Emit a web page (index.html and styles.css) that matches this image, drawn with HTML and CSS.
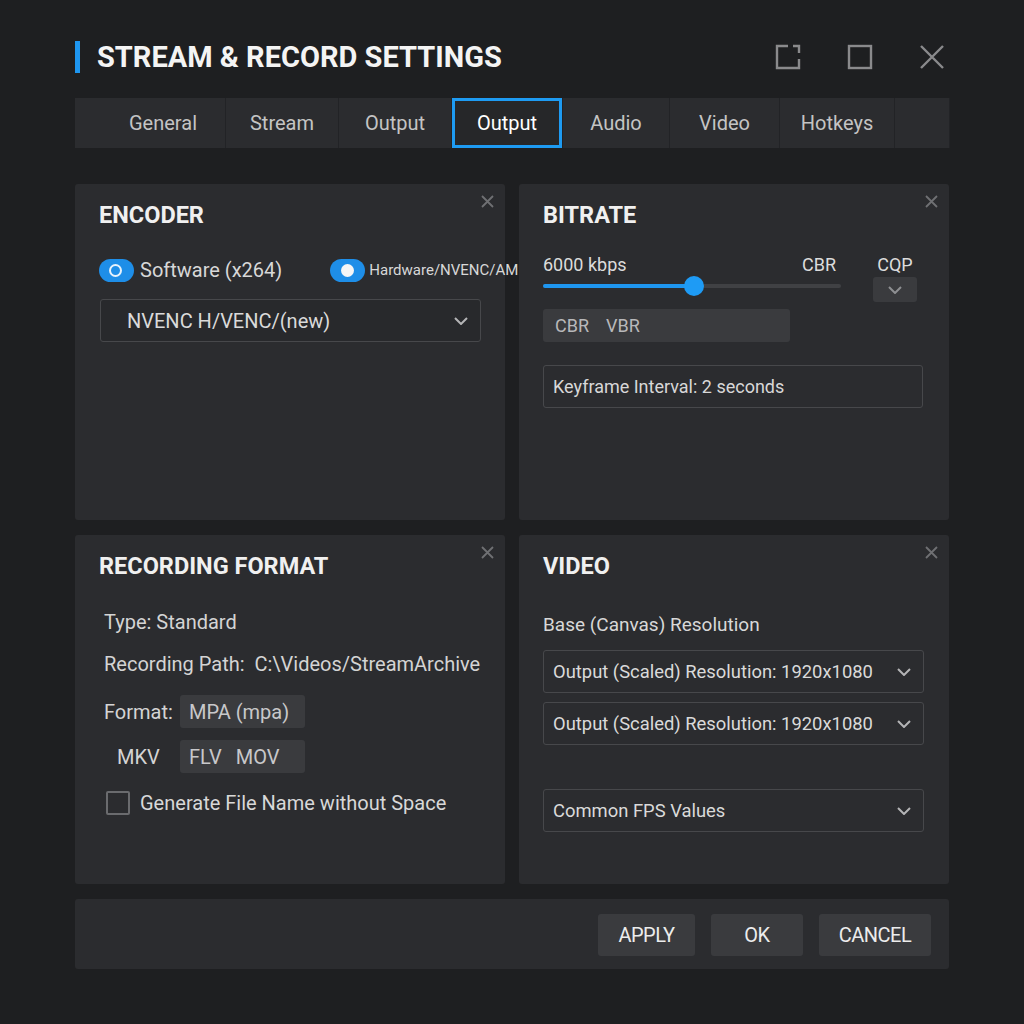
FILE: index.html
```html
<!DOCTYPE html>
<html lang="en">
<head>
  <meta charset="UTF-8" />
  <meta name="viewport" content="width=device-width, initial-scale=1.0" />
  <title>Stream &amp; Record Settings</title>
  <link rel="stylesheet" href="styles.css">
</head>
<body>
  <div class="window">
    <header class="titlebar">
      <h1>STREAM &amp; RECORD SETTINGS</h1>
      <div class="win-controls">
        <svg width="26" height="26" viewBox="0 0 26 26" fill="none" stroke="#8a8a8c" stroke-width="2.4">
          <path d="M13 2H2v22h22v-9" />
          <path d="M18 2h6v7" />
        </svg>
        <svg width="26" height="26" viewBox="0 0 26 26" fill="none" stroke="#8a8a8c" stroke-width="2.4">
          <rect x="2" y="2" width="22" height="22" />
        </svg>
        <svg width="26" height="26" viewBox="0 0 26 26" fill="none" stroke="#8a8a8c" stroke-width="2.4">
          <path d="M2 2l22 22M24 2L2 24" />
        </svg>
      </div>
    </header>

    <nav class="tabs">
      <div class="tab tab-first">General</div>
      <div class="tab w112">Stream</div>
      <div class="tab w112">Output</div>
      <div class="tab active">Output</div>
      <div class="tab w106">Audio</div>
      <div class="tab w109">Video</div>
      <div class="tab w114">Hotkeys</div>
      <div class="tab tab-fill"></div>
    </nav>

    <main class="panels">
      <section class="panel">
        <svg class="close" width="13" height="13" viewBox="0 0 13 13"><path d="M1 1l11 11M12 1L1 12" /></svg>
        <h2>ENCODER</h2>
        <div class="toggle-row">
          <span class="toggle ring"></span>
          <span class="toggle-label">Software (x264)</span>
          <span class="toggle dot"></span>
          <span class="toggle-label small">Hardware/NVENC/AMD</span>
        </div>
        <div class="select wide">
          <span>NVENC H/VENC/(new)</span>
          <svg class="chev" width="14" height="8" viewBox="0 0 14 8"><path d="M1 1l6 6 6-6" /></svg>
        </div>
      </section>

      <section class="panel">
        <svg class="close" width="13" height="13" viewBox="0 0 13 13"><path d="M1 1l11 11M12 1L1 12" /></svg>
        <h2>BITRATE</h2>
        <div class="rate-row">
          <div class="rate-main">
            <div class="rate-labels">
              <span>6000 kbps</span>
              <span>CBR</span>
            </div>
            <div class="slider">
              <div class="slider-fill" style="width: 151px"></div>
              <div class="slider-knob" style="left: 151px"></div>
            </div>
          </div>
          <div class="cqp">
            <span>CQP</span>
            <div class="mini-btn">
              <svg class="chev" width="14" height="8" viewBox="0 0 14 8"><path d="M1 1l6 6 6-6" /></svg>
            </div>
          </div>
        </div>
        <div class="seg">
          <span>CBR</span>
          <span>VBR</span>
        </div>
        <div class="field">Keyframe Interval: 2 seconds</div>
      </section>

      <section class="panel">
        <svg class="close" width="13" height="13" viewBox="0 0 13 13"><path d="M1 1l11 11M12 1L1 12" /></svg>
        <h2>RECORDING FORMAT</h2>
        <div class="info">
          <p>Type: Standard</p>
          <p>Recording Path:&nbsp; C:\Videos/StreamArchive</p>
          <div class="fmt-row">
            <span class="fmt-label">Format:</span>
            <span class="chip">MPA (mpa)</span>
          </div>
          <div class="fmt-row">
            <span class="fmt-label mkv">MKV</span>
            <span class="chip"><span>FLV</span><span>MOV</span></span>
          </div>
          <label class="check-row">
            <span class="checkbox"></span>
            Generate File Name without Space
          </label>
        </div>
      </section>

      <section class="panel">
        <svg class="close" width="13" height="13" viewBox="0 0 13 13"><path d="M1 1l11 11M12 1L1 12" /></svg>
        <h2>VIDEO</h2>
        <p class="sub">Base (Canvas) Resolution</p>
        <div class="select field-select">
          <span>Output (Scaled) Resolution: 1920x1080</span>
          <svg class="chev" width="14" height="8" viewBox="0 0 14 8"><path d="M1 1l6 6 6-6" /></svg>
        </div>
        <div class="select field-select">
          <span>Output (Scaled) Resolution: 1920x1080</span>
          <svg class="chev" width="14" height="8" viewBox="0 0 14 8"><path d="M1 1l6 6 6-6" /></svg>
        </div>
        <div class="select field-select fps">
          <span>Common FPS Values</span>
          <svg class="chev" width="14" height="8" viewBox="0 0 14 8"><path d="M1 1l6 6 6-6" /></svg>
        </div>
      </section>
    </main>

    <footer class="actions">
      <button class="btn apply">APPLY</button>
      <button class="btn ok">OK</button>
      <button class="btn cancel">CANCEL</button>
    </footer>
  </div>
</body>
</html>
```

FILE: styles.css
```css
body {
  margin: 0;
  background: #1e1f21;
  color: #d6d6d6;
  font-family: Roboto, 'Noto Sans', sans-serif;
}

.window {
  width: 874px;
  margin: 0 auto;
  padding-top: 38px;
}

/* title bar */
.titlebar {
  display: flex;
  align-items: center;
  justify-content: space-between;
  height: 38px;
}

h1 {
  margin: 0;
  font-size: 29px;
  font-weight: 700;
  color: #f4f4f4;
  border-left: 5px solid #1e96f0;
  padding-left: 17px;
  line-height: 32px;
}

.win-controls {
  display: flex;
  gap: 46px;
  padding-right: 4px;
}

/* tabs */
.tabs {
  display: flex;
  margin-top: 22px;
  height: 50px;
  background: #2a2b2e;
  border-radius: 2px;
  gap: 1px;
}

.tab {
  display: flex;
  align-items: center;
  justify-content: center;
  background: #2b2c2f;
  font-size: 20px;
  color: #c4c4c4;
  box-shadow: 1px 0 0 #222326;
}

.tab-first { width: 150px; padding-left: 26px; box-sizing: border-box; }
.w112 { width: 112px; }
.w106 { width: 106px; }
.w109 { width: 109px; }
.w114 { width: 114px; }
.tab-fill { flex: 1; }

.tab.active {
  width: 110px;
  box-sizing: border-box;
  border: 3px solid #1e9bf2;
  background: #262729;
  color: #ffffff;
}

/* panels */
.panels {
  display: grid;
  grid-template-columns: 430px 430px;
  grid-template-rows: 336px 349px;
  column-gap: 14px;
  row-gap: 15px;
  margin-top: 36px;
}

.panel {
  position: relative;
  background: #2b2c2f;
  border-radius: 3px;
  padding: 20px 24px 0;
}

.close {
  position: absolute;
  top: 11px;
  right: 11px;
  fill: none;
  stroke: #6f7073;
  stroke-width: 1.8;
}

h2 {
  margin: 0;
  font-size: 23.5px;
  font-weight: 700;
  color: #f0f0f0;
  line-height: 22px;
}

/* encoder */
.toggle-row {
  display: flex;
  align-items: center;
  margin-top: 32px;
  width: 419px;
  overflow: hidden;
  white-space: nowrap;
}

.toggle {
  position: relative;
  flex: none;
  width: 35px;
  height: 23px;
  border-radius: 12px;
  background: #1e8ee8;
}

.toggle.ring::after {
  content: "";
  position: absolute;
  left: 10px;
  top: 5px;
  width: 9px;
  height: 9px;
  border: 2px solid #e6f2fc;
  border-radius: 50%;
}

.toggle.dot {
  margin-left: 48px;
}

.toggle.dot::after {
  content: "";
  position: absolute;
  left: 11px;
  top: 5px;
  width: 13px;
  height: 13px;
  background: #f6f6f6;
  border-radius: 50%;
}

.toggle-label {
  margin-left: 6px;
  font-size: 20px;
  color: #d8d8d8;
}

.toggle-label.small {
  font-size: 15px;
  margin-left: 4px;
}

.select {
  display: flex;
  align-items: center;
  justify-content: space-between;
  box-sizing: border-box;
  height: 43px;
  border: 1px solid #47484b;
  border-radius: 3px;
  background: #28292c;
  padding: 0 12px 0 26px;
  font-size: 20px;
  color: #dadada;
}

.select.wide {
  width: 381px;
  margin-top: 17px;
  margin-left: 1px;
}

.chev {
  fill: none;
  stroke: #b4b4b6;
  stroke-width: 2;
}

/* bitrate */
.rate-row {
  display: flex;
  margin-top: 28px;
}

.rate-main {
  width: 298px;
}

.rate-labels {
  display: flex;
  justify-content: space-between;
  font-size: 18px;
  color: #dcdcdc;
  padding-right: 5px;
}

.slider {
  position: relative;
  height: 4px;
  margin-top: 9px;
  background: #404144;
  border-radius: 2px;
}

.slider-fill {
  height: 4px;
  background: #1e96f0;
  border-radius: 2px;
}

.slider-knob {
  position: absolute;
  top: -8px;
  width: 20px;
  height: 20px;
  margin-left: -10px;
  background: #1e9bf5;
  border-radius: 50%;
}

.cqp {
  display: flex;
  flex-direction: column;
  align-items: center;
  margin-left: 32px;
  font-size: 18px;
  color: #dcdcdc;
}

.mini-btn {
  display: flex;
  align-items: center;
  justify-content: center;
  width: 44px;
  height: 25px;
  margin-top: 2px;
  background: #3a3b3e;
  border-radius: 3px;
}

.mini-btn .chev {
  stroke: #8e8f92;
}

.seg {
  display: flex;
  gap: 17px;
  width: 247px;
  height: 33px;
  box-sizing: border-box;
  align-items: center;
  padding-left: 12px;
  margin-top: 7px;
  background: #3a3b3e;
  border-radius: 3px;
  font-size: 18px;
  color: #b8b8ba;
}

.field {
  display: flex;
  align-items: center;
  box-sizing: border-box;
  width: 380px;
  height: 43px;
  margin-top: 23px;
  padding-left: 9px;
  border: 1px solid #47484b;
  border-radius: 3px;
  font-size: 18px;
  color: #d8d8d8;
}

/* recording format */
.info {
  padding-left: 5px;
  margin-top: 34px;
  font-size: 20px;
  color: #d4d4d4;
}

.info p {
  margin: 0 0 19px;
  line-height: 23px;
}

.fmt-row {
  display: flex;
  align-items: center;
  height: 33px;
  margin-bottom: 12px;
}

.fmt-label {
  width: 76px;
}

.fmt-label.mkv {
  padding-left: 13px;
  width: 63px;
}

.chip {
  display: flex;
  gap: 14px;
  align-items: center;
  box-sizing: border-box;
  width: 125px;
  height: 33px;
  padding-left: 9px;
  background: #3a3b3e;
  border-radius: 3px;
  color: #c8c8ca;
}

.check-row {
  display: flex;
  align-items: center;
  gap: 10px;
  margin-top: 18px;
  color: #d8d8d8;
}

.checkbox {
  width: 20px;
  height: 20px;
  margin-left: 2px;
  border: 2px solid #6a6b6e;
  border-radius: 2px;
}

/* video */
.sub {
  margin: 36px 0 0;
  font-size: 19px;
  line-height: 23px;
  color: #d8d8d8;
}

.field-select {
  width: 381px;
  padding: 0 12px 0 9px;
  font-size: 18.4px;
  background: transparent;
  margin-top: 9px;
}

.sub + .field-select {
  margin-top: 14px;
}

.field-select.fps {
  margin-top: 44px;
}

/* footer */
.actions {
  display: flex;
  justify-content: flex-end;
  align-items: center;
  gap: 16px;
  height: 70px;
  margin-top: 15px;
  padding-right: 18px;
  background: #2b2c2f;
  border-radius: 3px;
}

.btn {
  height: 42px;
  margin-top: 2px;
  border: none;
  border-radius: 3px;
  background: #3a3b3e;
  color: #ececec;
  font-family: Roboto, sans-serif;
  font-size: 20px;
  letter-spacing: -0.5px;
}

.apply { width: 97px; }
.ok { width: 92px; }
.cancel { width: 112px; }
```
